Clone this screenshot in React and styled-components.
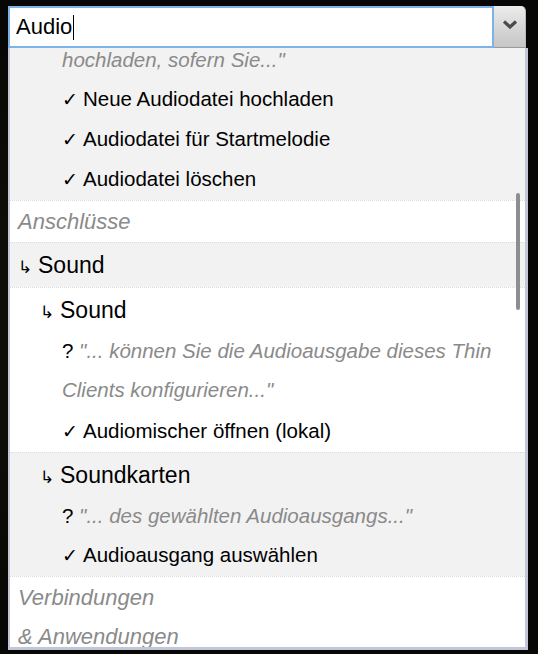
import React, { useLayoutEffect, useRef } from "react";
import styled, { createGlobalStyle } from "styled-components";

const GlobalStyle = createGlobalStyle`
  html, body {
    margin: 0;
    padding: 0;
    background: #070705;
    font-family: "Liberation Sans", Arial, sans-serif;
  }
`;

const groups = [
  {
    shade: true,
    rows: [
      { kind: "heading", level: 1, text: "Audiodateien" },
      { kind: "question", level: 2, text: "\"... können Sie eigene Audiodateien", more: "hochladen, sofern Sie...\"" },
      { kind: "item", level: 2, text: "Neue Audiodatei hochladen" },
      { kind: "item", level: 2, text: "Audiodatei für Startmelodie" },
      { kind: "item", level: 2, text: "Audiodatei löschen" },
    ],
  },
  { shade: false, rows: [{ kind: "section", level: 0, text: "Anschlüsse" }] },
  { shade: true, rows: [{ kind: "heading", level: 0, text: "Sound" }] },
  {
    shade: false,
    rows: [
      { kind: "heading", level: 1, text: "Sound" },
      { kind: "question", level: 2, text: "\"... können Sie die Audioausgabe dieses Thin Clients konfigurieren...\"" },
      { kind: "item", level: 2, text: "Audiomischer öffnen (lokal)", after: true },
    ],
  },
  {
    shade: true,
    rows: [
      { kind: "heading", level: 1, text: "Soundkarten" },
      { kind: "question", level: 2, text: "\"... des gewählten Audioausgangs...\"" },
      { kind: "item", level: 2, text: "Audioausgang auswählen" },
    ],
  },
  {
    shade: false,
    rows: [{ kind: "section", level: 0, text: "Verbindungen\n& Anwendungen" }],
  },
];

export default function App() {
  const listRef = useRef(null);

  useLayoutEffect(() => {
    if (listRef.current) listRef.current.scrollTop = 90;
  }, []);

  return (
    <>
      <GlobalStyle />
      <Page>
        <Combo>
          <SearchBar>
            <SearchField>
              Audio
              <Caret />
            </SearchField>
            <ToggleButton>
              <svg width="16" height="9" viewBox="0 0 16 9">
                <polyline
                  points="2,1.5 8,7 14,1.5"
                  fill="none"
                  stroke="#4b4b4b"
                  strokeWidth="3.2"
                  strokeLinejoin="miter"
                />
              </svg>
            </ToggleButton>
          </SearchBar>
          <ListPanel>
            <ListScroll ref={listRef}>
              {groups.map((group, gi) => (
                <Group key={gi} $shade={group.shade} $first={gi === 0}>
                  {group.rows.map((row, ri) => {
                    if (row.kind === "section")
                      return (
                        <SectionRow key={ri} $level={row.level}>
                          {row.text}
                        </SectionRow>
                      );
                    if (row.kind === "heading")
                      return (
                        <HeadingRow key={ri} $level={row.level}>
                          <Arrow>↳</Arrow>
                          {row.text}
                        </HeadingRow>
                      );
                    if (row.kind === "question")
                      return (
                        <QuestionRow key={ri} $level={row.level}>
                          ? <Quote>{row.text}</Quote>
                          {row.more && (
                            <>
                              <br />
                              <Quote>{row.more}</Quote>
                            </>
                          )}
                        </QuestionRow>
                      );
                    return (
                      <ItemRow key={ri} $level={row.level} $after={row.after}>
                        <Check>✓</Check>
                        {row.text}
                      </ItemRow>
                    );
                  })}
                </Group>
              ))}
            </ListScroll>
            <Thumb />
          </ListPanel>
        </Combo>
      </Page>
    </>
  );
}

const Page = styled.div`
  width: 538px;
  height: 654px;
  overflow: hidden;
  padding: 6px 0 0 8px;
  box-sizing: border-box;
  background: radial-gradient(ellipse at 30% 50%, #15120a 0%, #070705 70%);
`;

const Combo = styled.div`
  width: 520px;
  display: flex;
  flex-direction: column;
`;

const SearchBar = styled.div`
  display: flex;
  height: 42px;
  width: 518px;
`;

const SearchField = styled.div`
  flex: 1;
  display: flex;
  align-items: center;
  background: #fff;
  border: 2px solid #7db3e8;
  padding-left: 6px;
  font-size: 22px;
  color: #000;
  box-sizing: border-box;
`;

const Caret = styled.span`
  display: inline-block;
  width: 1px;
  height: 25px;
  background: #000;
  margin-left: 1px;
`;

const ToggleButton = styled.div`
  width: 32px;
  display: flex;
  align-items: flex-start;
  justify-content: center;
  padding-top: 14px;
  box-sizing: border-box;
  background: linear-gradient(to bottom, #ececec 0%, #d6d6d6 55%, #c6c6c6 100%);
  border-top-right-radius: 5px;
  border-right: 1px solid #b9b9b9;
  border-bottom: 1px solid #9a9a9a;
`;

const ListPanel = styled.div`
  position: relative;
  height: 602px;
  background: #fff;
  border-left: 2px solid #c3c6d8;
  border-right: 3px solid #c3c6d8;
  border-bottom: 3px solid #c3c6d8;
  box-sizing: border-box;
`;

const ListScroll = styled.div`
  height: 100%;
  overflow: hidden;
`;

const Thumb = styled.div`
  position: absolute;
  left: 506px;
  top: 145px;
  width: 4px;
  height: 117px;
  border-radius: 2px;
  background: #8e8e8e;
`;

const Group = styled.div`
  background: ${(p) => (p.$shade ? "#f2f2f2" : "#fff")};
  border-top: ${(p) => (p.$first ? "none" : "1px dotted #dcdcdc")};
  padding: 1px 0;
`;

const Row = styled.div`
  padding-left: ${(p) => 8 + p.$level * 22}px;
  padding-right: 14px;
  color: #000;
`;

const SectionRow = styled(Row)`
  font-size: 22px;
  line-height: 39px;
  font-style: italic;
  color: #8a8a8a;
  white-space: pre-line;
`;

const HeadingRow = styled(Row)`
  font-size: 23px;
  line-height: 42px;
`;

const Arrow = styled.span`
  display: inline-block;
  width: 20px;
  font-size: 17px;
  line-height: 1;
  font-family: "DejaVu Sans", sans-serif;
`;

const QuestionRow = styled(Row)`
  font-size: 20.5px;
  line-height: 39px;
`;

const Quote = styled.span`
  font-style: italic;
  color: #8a8a8a;
`;

const ItemRow = styled(Row)`
  font-size: 20.5px;
  line-height: 40px;
  padding-top: ${(p) => (p.$after ? "2px" : "0")};
`;

const Check = styled.span`
  display: inline-block;
  width: 21px;
  font-family: "DejaVu Sans", sans-serif;
  font-size: 19px;
  font-weight: 300;
  line-height: 1;
`;
